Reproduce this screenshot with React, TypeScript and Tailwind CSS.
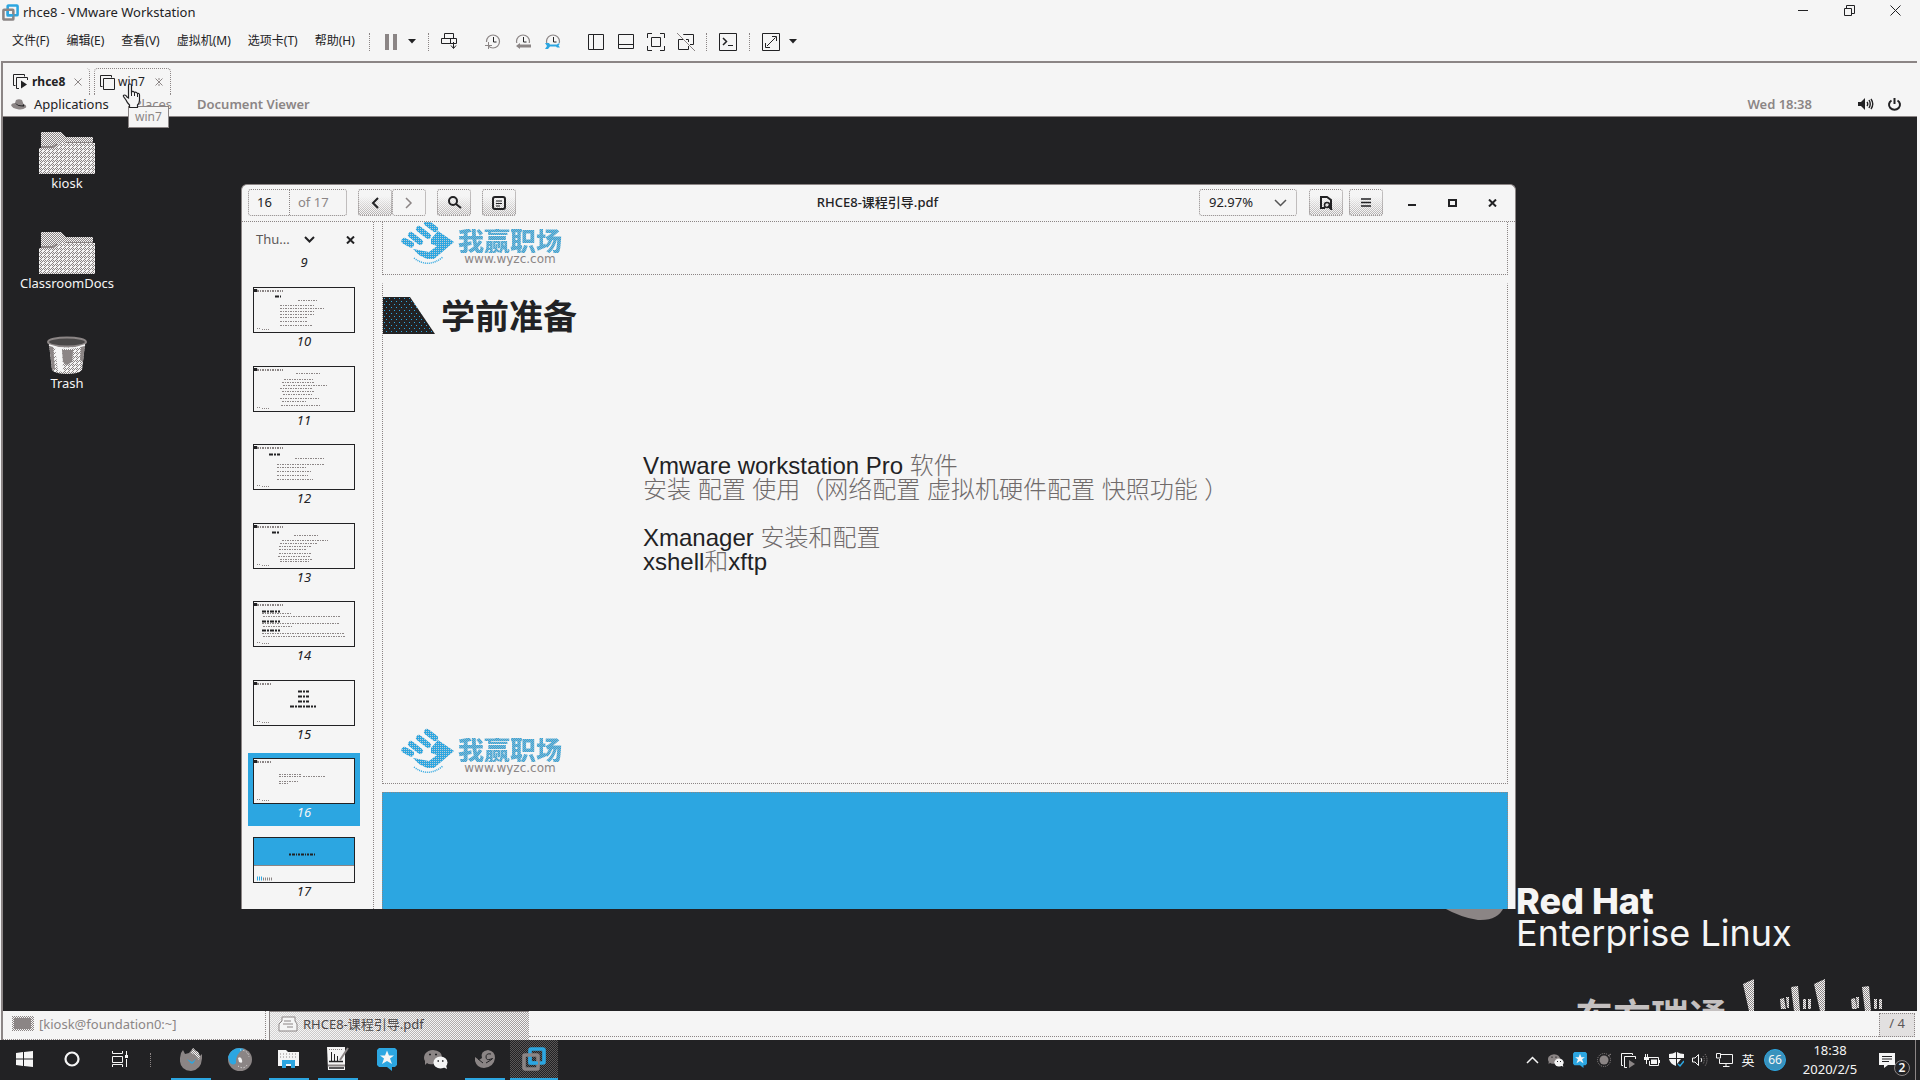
import React from 'react';

const INK = '#222224';
const GREY = '#8b8585';
const PAPER = '#f5f5f5';
const BLUE = '#2ca6e1';

function Patterns() {
  return (
    <svg width="0" height="0" className="absolute" aria-hidden="true">
      <defs>
        <pattern id="grain" width="2" height="2" patternUnits="userSpaceOnUse">
          <rect width="2" height="2" fill={PAPER} />
          <rect width="1" height="1" fill={GREY} />
          <rect x="1" y="1" width="1" height="1" fill={GREY} />
        </pattern>
        <pattern id="grainBlue" width="2" height="2" patternUnits="userSpaceOnUse">
          <rect width="2" height="2" fill={BLUE} />
          <rect x="1" y="1" width="1" height="1" fill="#b9cbd4" />
        </pattern>
        <pattern id="grainInk" width="5" height="6" patternUnits="userSpaceOnUse">
          <rect width="5" height="6" fill={INK} />
          <rect x="1" y="1" width="1" height="1" fill={BLUE} />
          <rect x="3" y="4" width="1" height="1" fill={BLUE} />
        </pattern>
        <pattern id="grainLight" width="4" height="4" patternUnits="userSpaceOnUse">
          <rect width="4" height="4" fill={PAPER} />
          <path d="M0 0h1v1h-1zM2 0h1v1h-1zM1 1h1v1h-1zM3 1h1v1h-1zM2 2h1v1h-1zM1 3h1v1h-1z" fill={GREY} />
        </pattern>
      </defs>
    </svg>
  );
}

function Svg({ w, h = w, children, className = '' }: { w: number; h?: number; children: React.ReactNode; className?: string }) {
  return (
    <svg width={w} height={h} viewBox={`0 0 ${w} ${h}`} fill="none" stroke={INK} className={`shrink-0 ${className}`} aria-hidden="true">
      {children}
    </svg>
  );
}

function VmLogo({ size }: { size: number }) {
  return (
    <svg width={size} height={size} viewBox="0 0 24 24" fill="none" strokeWidth="3.6" aria-hidden="true">
      <rect x="8" y="2" width="14" height="14" rx="1" stroke={BLUE} />
      <rect x="2" y="8" width="14" height="14" rx="1" stroke={GREY} />
      <path d="M8 10V16H16" stroke={BLUE} strokeWidth="3" />
    </svg>
  );
}

/* ---------- VMware window chrome ---------- */

function TitleBar() {
  return (
    <header className="flex h-6 items-center pl-[2px] text-xs">
      <VmLogo size={17} />
      <h1 className="ml-1 text-[13px] leading-4">rhce8 - VMware Workstation</h1>
      <div className="ml-auto flex h-full items-start">
        <button aria-label="Minimize" className="flex h-5 w-[46px] items-center justify-center">
          <Svg w={11}><path d="M0 5.500H10" /></Svg>
        </button>
        <button aria-label="Restore" className="flex h-5 w-[46px] items-center justify-center">
          <Svg w={11}><path d="M.5 3.500H7.500V10.500H.5ZM2.500 3V.5H10.500V8.500H8" /></Svg>
        </button>
        <button aria-label="Close" className="mr-[2px] flex h-5 w-[46px] items-center justify-center">
          <Svg w={11}><path d="M.5.5L10.500 10.500M10.500.5L.5 10.500" /></Svg>
        </button>
      </div>
    </header>
  );
}

const menus = ['文件(F)', '编辑(E)', '查看(V)', '虚拟机(M)', '选项卡(T)', '帮助(H)'];

function Sep() {
  return <span className="h-[18px] border-l border-dotted border-[#8b8585]" />;
}

function Tool({ label, children }: { label: string; children: React.ReactNode }) {
  return (
    <button aria-label={label} className="flex h-6 w-[30px] items-center justify-center">
      {children}
    </button>
  );
}

function Caret() {
  return <Svg w={8} h={5}><path d="M0 0H8L4 4.500Z" fill={INK} stroke="none" /></Svg>;
}

function Clock({ kind }: { kind: 'add' | 'back' | 'manage' }) {
  return (
    <Svg w={18}>
      <circle cx="9" cy="8.500" r="6.500" stroke={GREY} strokeWidth="1.200" />
      <path d="M9.500 4V9H12.500" />
      {kind === 'add' && <><path d="M0 9H5V18H0Z" fill={PAPER} stroke="none" /><path d="M1 12.500H8M4.500 9V16" stroke={GREY} /></>}
      {kind === 'back' && <><path d="M1 10H18V18H1Z" fill={PAPER} stroke="none" /><path d="M2 13L6 10V11.500H17V14.500H6V16Z" fill={GREY} stroke="none" /></>}
      {kind === 'manage' && <><path d="M0 10H18V18H0Z" fill={PAPER} stroke="none" /><path d="M1 10H5L6 11.500H13L14 10.500H16L14.500 12.500L16 14.500H13L12 13.500H6L4 16H1L3 13Z" fill={BLUE} stroke="none" /></>}
    </Svg>
  );
}

function MenuBar() {
  return (
    <div className="flex h-[37px] items-center pb-1 pl-3">
      <nav className="flex gap-[17px]">
        {menus.map((m) => (
          <button key={m} className="text-xs leading-4 whitespace-nowrap">{m}</button>
        ))}
      </nav>
      <div className="ml-[14px] flex items-center pt-[2px]">
        <Sep />
        <button aria-label="Suspend" className="ml-[15px] flex items-center gap-[11px]">
          <Svg w={12} h={16}><path d="M0 0H4V16H0ZM8 0H12V16H8Z" fill={GREY} stroke="none" /></Svg>
          <Caret />
        </button>
        <span className="w-3" />
        <Sep />
        <span className="w-[6px]" />
        <Tool label="Send Ctrl+Alt+Del">
          <Svg w={17}><path d="M3.500 5.500V.5H12.500V5.500M.5 5.500H15.500V10.500H.5ZM9.500 5.500V10.500M12.500 9V15M10 12.500L12.500 15.500L15 12.500" /></Svg>
        </Tool>
        <span className="w-[13px]" />
        <Tool label="Take snapshot"><Clock kind="add" /></Tool>
        <Tool label="Revert snapshot"><Clock kind="back" /></Tool>
        <Tool label="Manage snapshots"><Clock kind="manage" /></Tool>
        <span className="w-[13px]" />
        <Tool label="Show library"><Svg w={16}><path d="M.5.5H15.500V15.500H.5ZM5.500.5V15.500" /></Svg></Tool>
        <Tool label="Show thumbnails"><Svg w={16}><path d="M.5.5H15.500V14.500H.5ZM.5 10.500H15.500" /></Svg></Tool>
        <Tool label="Full screen">
          <Svg w={18}><path d="M.5 5V.5H5M13 .5H17.500V5M17.500 13V17.500H13M5 17.500H.5V13M4.500 4.500H13.500V13.500H4.500Z" /></Svg>
        </Tool>
        <Tool label="Unity">
          <Svg w={18}><path d="M6.500 2V1.500H16.500V11.500H13M9 6.500H11.500V9M6 6.500H1.500V16.500H11.500V13" /><path d="M0 0L18 18" stroke={GREY} /></Svg>
        </Tool>
        <span className="w-[5px]" />
        <Sep />
        <span className="w-[6px]" />
        <Tool label="Console view"><Svg w={18}><path d="M.5.5H17.500V17.500H.5Z" /><path d="M4 5L7.500 8.500L4 12" strokeWidth="1.500" /><path d="M9 12.500H14" /></Svg></Tool>
        <span className="w-[6px]" />
        <Sep />
        <span className="w-[6px]" />
        <Tool label="Stretch guest">
          <Svg w={18}><path d="M.5.5H17.500V17.500H.5ZM10 3.500H14.500V8M3.500 10V14.500H8M5 13L13.500 4.500" /></Svg>
        </Tool>
        <span className="w-[3px]" />
        <Caret />
      </div>
    </div>
  );
}

function VmTabs() {
  return (
    <div className="flex h-[32px] items-end pt-[5px]">
      <div className="flex h-full w-[87px] items-center rounded-tr border-r border-dotted border-[#8b8585] pl-[10px]">
        <Svg w={15}><path d="M2.500 11.500H.5V.5H11.500V2.500M6 14.500H3.500V3.500H14.500V6" /><path d="M8 6.500L14 10.500L8 14.500Z" fill={INK} stroke="none" /></Svg>
        <button className="ml-1 w-[36px] text-left text-xs leading-4 font-bold">rhce8</button>
        <button aria-label="Close rhce8" className="ml-[6px]"><Svg w={8}><path d="M.5.5L7.500 7.500M7.500.5L.5 7.500" stroke={GREY} /></Svg></button>
      </div>
      <div className="relative ml-1 flex h-full w-[77px] items-center rounded-t border border-b-0 border-dotted border-[#8b8585] pl-[5px]">
        <Svg w={15}><path d="M2.500 11.500H.5V.5H11.500V2.500M3.500 3.500H14.500V14.500H3.500Z" /></Svg>
        <button className="ml-[3px] w-8 text-left text-xs leading-4">win7</button>
        <button aria-label="Close win7" className="ml-[5px]"><Svg w={8}><path d="M.5.5L7.500 7.500M7.500.5L.5 7.500M4 0V2M4 6V8" stroke={GREY} /></Svg></button>
        <svg width="19" height="26" viewBox="0 0 19 26" className="absolute top-[14px] left-[27px] z-30" aria-hidden="true">
          <path d="M6.500 15V2.500Q6.500 1 8 1T9.500 2.500V9Q11 7.500 12.500 9.500Q14 8.500 15.500 10.500Q17.500 10 17.500 12V17Q17.500 20 15.500 22V24.500H7.500V22Q5 19.500 4 17L1.500 13.500Q1 12 2.500 12T5 14Z" fill={PAPER} stroke={INK} strokeWidth="1.200" />
          <path d="M9.500 9V13M12.500 10V13M15.500 11V14" stroke={INK} />
        </svg>
        <div role="tooltip" className="absolute top-[37px] left-[33px] z-20 border border-[#8b8585] bg-[#f5f5f5] px-[6px] py-[2px] text-xs leading-4 text-[#8b8585]">win7</div>
      </div>
    </div>
  );
}

/* ---------- Guest desktop ---------- */

function GnomeTop() {
  return (
    <div className="flex h-[22px] items-center border-b border-[#8b8585] pr-[15px] pb-[3px] pl-2 text-[13px] leading-4">
      <svg width="16" height="11" viewBox="0 0 16 11" aria-hidden="true">
        <path d="M4 4L5 1Q8-.5 11 1L12.500 5Q16 6 15 8.500Q12 11 8 10.500Q1 9.500 0 6Q1 4 4 4Z" fill={GREY} />
        <path d="M4 4Q7 8 13 7.500Q14 6.500 12.500 5L11.500 6.500Q7 6.500 4 4Z" fill={INK} />
      </svg>
      <button className="ml-[7px]">Applications</button>
      <button className="ml-[25px] text-[#8b8585]">Places</button>
      <button className="ml-[25px] font-semibold text-[#8b8585]">Document Viewer</button>
      <time className="mr-[46px] ml-auto font-semibold text-[#8b8585]">Wed 18:38</time>
      <button aria-label="Volume">
        <Svg w={16} h={12}><path d="M0 4H3L7 0V12L3 8H0Z" fill={INK} stroke="none" /><path d="M9 4Q10.500 6 9 8M11 2Q13.500 6 11 10M13 1Q16.500 6 13 11" strokeWidth="1.400" /></Svg>
      </button>
      <button aria-label="Power" className="ml-[13px]">
        <Svg w={15} h={13}><path d="M4.500 2.500A5.500 5 0 1 0 10.500 2.500M7.500 0V6" strokeWidth="2" /></Svg>
      </button>
    </div>
  );
}

function Folder() {
  return (
    <svg width="56" height="42" viewBox="0 0 56 42" aria-hidden="true">
      <path d="M2 0H22L27 5H54V20H2Z" fill="url(#grain)" />
      <path d="M0 16H15L20 11H56V42H0Z" fill="url(#grainLight)" />
      <path d="M2 15H14L18 12" stroke={GREY} strokeWidth="2" fill="none" />
      <path d="M26 10.500H54" stroke={GREY} fill="none" />
    </svg>
  );
}

function Trash() {
  return (
    <svg width="40" height="38" viewBox="0 0 40 38" aria-hidden="true">
      <path d="M2 8L5 34Q8 38 20 38T35 34L38 8Z" fill="url(#grainLight)" />
      <path d="M2 8L5 33L8 34L6 9Z" fill={GREY} />
      <path d="M8 11H15L16 36L11 35Z" fill={PAPER} />
      <path d="M15 14H26L25 26L20 29L16 26Z" fill={GREY} />
      <path d="M38 9L36 26L33 24L34 10Z" fill={GREY} />
      <ellipse cx="20" cy="6" rx="19" ry="4.500" fill="#4a4848" stroke={GREY} strokeWidth="2" />
      <path d="M2 9Q20 16 38 9" stroke={PAPER} strokeWidth="1.500" fill="none" />
    </svg>
  );
}

function DesktopIcon({ label, children }: { label: string; children: React.ReactNode }) {
  return (
    <button className="flex h-[100px] flex-col items-center text-[#f5f5f5]">
      <span className="flex h-[43px] items-end">{children}</span>
      <span className="text-[13px] leading-[18px]">{label}</span>
    </button>
  );
}

/* Each row: x, y, length; a fourth value marks a heavy line */
type Row = [number, number, number, number?];
const thumbs: { n: number; rows: Row[] }[] = [
  { n: 10, rows: [[22, 9, 6, 1], [45, 13, 20], [27, 18, 34], [27, 21, 44], [27, 24, 34], [27, 27, 34], [27, 30, 27], [27, 34, 28], [27, 38, 32]] },
  { n: 11, rows: [[43, 7, 24], [31, 13, 30], [29, 16, 32], [30, 19, 44], [27, 22, 33], [29, 25, 32], [30, 28, 30], [27, 32, 40], [29, 35, 24], [28, 39, 39]] },
  { n: 12, rows: [[16, 10, 11, 1], [42, 14, 30], [24, 20, 48], [24, 23, 30], [24, 27, 34], [24, 31, 31], [24, 35, 36]] },
  { n: 13, rows: [[19, 9, 8, 1], [41, 12, 24], [29, 17, 46], [27, 20, 38], [26, 23, 32], [26, 26, 28], [26, 30, 32], [25, 33, 33], [27, 36, 32], [27, 38, 29]] },
  { n: 14, rows: [[9, 10, 18, 1], [9, 12, 29], [10, 15, 78], [9, 20, 18, 1], [9, 22, 78], [10, 25, 30], [9, 29, 18, 1], [9, 32, 82], [10, 35, 82]] },
  { n: 15, rows: [[45, 11, 11, 1], [45, 16, 11, 1], [45, 21, 11, 1], [37, 26, 26, 1]] },
  { n: 16, rows: [[26, 16, 22], [50, 18, 23], [26, 18, 22], [26, 23, 20], [26, 25, 10]] },
  { n: 17, rows: [] },
];

function Thumb({ n, rows }: { n: number; rows: Row[] }) {
  const active = n === 16;
  return (
    <button
      aria-label={`Page ${n}`}
      className={`flex h-[73px] flex-col items-center pt-[5px] ${active ? 'bg-[#2ca6e1] text-[#f5f5f5]' : ''}`}
    >
      <svg width="102" height="46" viewBox="0 0 102 46" fill="none" className="shrink-0">
        <rect x=".5" y=".5" width="101" height="45" fill={PAPER} stroke={INK} />
        {n === 17 ? (
          <>
            <rect x="1" y="1" width="100" height="27" fill={BLUE} />
            <path d="M1 28.500H101" stroke={GREY} />
            <path d="M36 17.500H62" stroke={INK} strokeWidth="2" strokeDasharray="2 1 3 1 1 1" />
            <path d="M4 41.500H9" stroke={BLUE} strokeWidth="4" strokeDasharray="1 1" />
            <path d="M10 42H20" stroke={GREY} strokeWidth="3" strokeDasharray="1 1" />
          </>
        ) : (
          <>
            <path d="M1 2H4L5 5H1Z" fill={INK} />
            <path d={n > 14 ? 'M4 4H18' : 'M4 4H30'} stroke={GREY} strokeWidth="2" strokeDasharray="2 1 1 1" />
            <path d="M4 41.500H7M9 42.500H17" stroke={GREY} strokeDasharray="1 1" />
          </>
        )}
        {rows.map(([x, y, w, heavy], i) => (
          <path
            key={i}
            d={`M${x} ${y + 0.5}h${w}`}
            stroke={heavy ? INK : GREY}
            strokeWidth={heavy ? 2 : 1}
            strokeDasharray={heavy ? '4 1 2 1' : '2 1 1 1'}
          />
        ))}
      </svg>
      <span className="text-[13px] leading-4 italic">{n}</span>
    </button>
  );
}

function SchoolLogo() {
  return (
    <div className="flex items-center gap-[3px] pb-[9px] pl-[18px]">
      <svg width="54" height="46" viewBox="0 0 54 46" fill="none" aria-hidden="true">
        <g stroke="url(#grainBlue)" strokeWidth="6" strokeLinecap="round">
          <path d="M26 4L34 10" /><path d="M18 10L27 17" /><path d="M10 16L19 23" /><path d="M3.500 22L10 25.500" />
        </g>
        <path d="M37 12L53 23L33 40H26L18 36L12 30L28 33L36 27L30 25V20Z" fill="url(#grainBlue)" />
        <path d="M13 39Q27 50 42 38" stroke={BLUE} strokeWidth="1.500" strokeDasharray="1 1" />
      </svg>
      <div className="flex flex-col items-center pt-[10px]">
        <span className="bg-[repeating-conic-gradient(#8fb4c6_0_25%,#2ca6e1_0_50%)] bg-[length:2px_2px] bg-clip-text text-[26px] leading-6 font-black text-transparent">我赢职场</span>
        <span className="font-['DejaVu_Sans'] text-xs leading-3 text-[#8b8585]">www.wyzc.com</span>
      </div>
    </div>
  );
}

const shade =
  'bg-[linear-gradient(to_bottom,#f5f5f5_25%,rgba(245,245,245,0.35)),repeating-conic-gradient(#8b8585_0_25%,#f5f5f5_0_50%)] bg-[length:100%_100%,2px_2px]';

function HeaderButton({ label, children, flat = false }: { label: string; children: React.ReactNode; flat?: boolean }) {
  return (
    <button
      aria-label={label}
      className={`flex h-[27px] w-[34px] items-center justify-center rounded-[3px] border border-dotted border-[#8b8585] ${flat ? '' : shade}`}
    >
      {children}
    </button>
  );
}

function PdfHeader() {
  return (
    <div className="flex h-[37px] items-center border-b border-dotted border-[#8b8585] pr-[3px] pb-px pl-[6px] text-[13px]">
      <div className="flex h-[27px] w-[99px] rounded-[3px] border border-dotted border-[#8b8585]">
        <input aria-label="Page" defaultValue="16" className="w-[41px] border-r border-dotted border-[#8b8585] bg-transparent pl-[8px] outline-none" />
        <span className="pl-2 leading-[25px] text-[#8b8585]">of 17</span>
      </div>
      <div className="ml-[11px] flex">
        <HeaderButton label="Previous page"><Svg w={8} h={12}><path d="M7 1L2 6L7 11" strokeWidth="2" /></Svg></HeaderButton>
        <HeaderButton label="Next page" flat><Svg w={8} h={12}><path d="M1 1L6 6L1 11" stroke={GREY} strokeWidth="1.500" /></Svg></HeaderButton>
      </div>
      <span className="w-[11px]" />
      <HeaderButton label="Find"><Svg w={15} h={13}><circle cx="6" cy="5" r="4" strokeWidth="2" /><path d="M9 8L14 12" strokeWidth="2" /></Svg></HeaderButton>
      <span className="w-[11px]" />
      <HeaderButton label="Annotate"><Svg w={14} h={14}><rect x="1" y="1" width="12" height="12" rx="2" strokeWidth="2" /><path d="M4 5H10M4 7.500H10M4 10H8" /></Svg></HeaderButton>
      <h2 className="flex-1 pl-10 text-center font-medium whitespace-nowrap">RHCE8-课程引导.pdf</h2>
      <button aria-label="Zoom 92.97%" className="flex h-[27px] w-[98px] items-center justify-between rounded-[3px] border border-dotted border-[#8b8585] px-[9px]">
        92.97%
        <Svg w={13} h={8}><path d="M1 1L6.500 6.500L12 1" stroke="#555" strokeWidth="1.500" /></Svg>
      </button>
      <span className="w-3" />
      <HeaderButton label="Document options">
        <Svg w={14} h={14}><path d="M6 12H2V1H8L12 4V13" strokeWidth="2" /><circle cx="8" cy="9" r="2.500" strokeWidth="1.500" /><path d="M9 10L13 14" strokeWidth="2" /></Svg>
      </HeaderButton>
      <span className="w-[6px]" />
      <HeaderButton label="Menu"><Svg w={10} h={9}><path d="M0 1H10M0 4.500H10M0 8H10" strokeWidth="1.500" /></Svg></HeaderButton>
      <div className="ml-[9px] flex">
        <button aria-label="Minimize window" className="flex w-10 justify-center pt-1"><Svg w={8} h={4}><path d="M0 2H8" strokeWidth="2" /></Svg></button>
        <button aria-label="Maximize window" className="flex w-10 items-center justify-center"><Svg w={9} h={8}><path d="M1 1H8V7H1Z" strokeWidth="2" /></Svg></button>
        <button aria-label="Close window" className="flex w-10 items-center justify-center"><Svg w={9} h={8}><path d="M1 .5L8 7.500M8 .5L1 7.500" strokeWidth="2" /></Svg></button>
      </div>
    </div>
  );
}

function PdfWindow() {
  return (
    <section className="absolute top-[67px] right-[401px] bottom-[102px] left-[238px] flex flex-col overflow-hidden rounded-t-md border border-b-0 border-[#8b8585] bg-[#f5f5f5]">
      <PdfHeader />
      <div className="flex min-h-0 flex-1">
        <aside className="flex w-[132px] flex-col border-r border-dotted border-[#8b8585] text-[13px]">
          <div className="flex h-[35px] items-center pl-[14px]">
            <span className="w-12 text-[#5c5858]">Thu...</span>
            <button aria-label="Sidebar view"><Svg w={11} h={7}><path d="M1 1L5.500 5.500L10 1" strokeWidth="2" /></Svg></button>
            <button aria-label="Close sidebar" className="ml-[31px]"><Svg w={9} h={8}><path d="M1 .5L8 7.500M8 .5L1 7.500" strokeWidth="2" /></Svg></button>
          </div>
          <span className="h-[25px] pr-[7px] text-center leading-[10px] italic">9</span>
          <div className="flex flex-1 flex-col justify-between pr-[13px] pb-1 pl-[6px]">
            {thumbs.map((t) => <Thumb key={t.n} {...t} />)}
          </div>
        </aside>
        <div className="flex min-w-0 flex-1 flex-col pr-[7px] pl-[8px]">
          <div className="flex h-[53px] shrink-0 items-end overflow-hidden border border-t-0 border-dotted border-[#8b8585]">
            <SchoolLogo />
          </div>
          <article className="mt-2 flex flex-1 flex-col border border-dotted border-[#8b8585] border-t-transparent">
            <div className="mt-[13px] flex items-center">
              <svg width="52" height="37" viewBox="0 0 52 37" aria-hidden="true"><path d="M0 0H27L52 37H0Z" fill="url(#grainInk)" /></svg>
              <h3 className="ml-[6px] text-[34px] leading-[36px] font-bold">学前准备</h3>
            </div>
            <div className="mt-[120px] ml-[260px] font-['Liberation_Sans','Noto_Sans_CJK_SC',sans-serif] text-2xl leading-6">
              <p>Vmware workstation Pro <span className="font-light text-[#6f6a6a]">软件</span></p>
              <p className="font-light text-[#6f6a6a]">安装 配置 使用（网络配置 虚拟机硬件配置 快照功能 ）</p>
              <p className="mt-6">Xmanager <span className="font-light text-[#6f6a6a]">安装和配置</span></p>
              <p>xshell<span className="font-light text-[#6f6a6a]">和</span>xftp</p>
            </div>
            <div className="mt-auto"><SchoolLogo /></div>
          </article>
          <div className="mt-[8px] h-[117px] shrink-0 border border-b-0 border-dotted border-[#8b8585] bg-[#2ca6e1]" />
        </div>
      </div>
    </section>
  );
}

function Desktop() {
  return (
    <main className="relative flex flex-1 overflow-hidden bg-[#222224]">
      <div className="flex w-32 flex-col pt-[14px]">
        <DesktopIcon label="kiosk"><Folder /></DesktopIcon>
        <DesktopIcon label="ClassroomDocs"><Folder /></DesktopIcon>
        <DesktopIcon label="Trash"><Trash /></DesktopIcon>
      </div>
      <svg width="64" height="34" viewBox="0 0 64 34" className="absolute right-[411px] bottom-[90px]" aria-hidden="true">
        <path d="M0 20Q20 31 36 33Q56 34 62 20V0H0Z" fill={GREY} />
      </svg>
      <div className="absolute right-[109px] bottom-[62px] w-[292px] font-['Inter',sans-serif] text-[36px] leading-8 whitespace-nowrap text-[#f5f5f5]">
        <p className="font-extrabold">Red Hat</p>
        <p>Enterprise Linux</p>
      </div>
      <div className="absolute right-[34px] bottom-0 flex h-8 items-start gap-4 overflow-hidden">
        <span className="mt-[18px] text-[38px] leading-[38px] font-bold text-[#c4c0c0]">东方瑞通</span>
        <svg width="140" height="32" viewBox="0 0 140 32" fill="url(#grain)" aria-hidden="true">
          <path d="M0 5L11 0V32H6ZM37 20L41 19L43 30H38ZM43 18H46V29H44ZM48 8L55 7L57 32H51ZM60 20H63V30H60ZM65 20H68V30H65ZM71 5L82 0V32H77ZM108 20L112 19L114 30H109ZM113 18H116V29H114ZM119 8L126 7L128 32H122ZM131 20H134V30H131ZM136 20H139V30H136Z" />
        </svg>
      </div>
      <PdfWindow />
    </main>
  );
}

function GnomeBottom() {
  return (
    <div className="flex h-[29px] shrink-0 items-stretch text-[13px] leading-4">
      <button className="flex w-[263px] items-center gap-[5px] border-r border-b border-dotted border-[#8b8585] pb-[3px] pl-[9px] text-[#8b8585]">
        <svg width="22" height="15" viewBox="0 0 22 15" aria-hidden="true"><rect width="22" height="15" fill="url(#grain)" /><rect x="2" y="2" width="17" height="11" fill={GREY} /></svg>
        [kiosk@foundation0:~]
      </button>
      <button className="ml-[3px] flex w-[260px] items-center gap-[5px] border-t border-l border-[#8b8585] bg-[linear-gradient(to_right,rgba(245,245,245,0.7),rgba(245,245,245,0.2)),repeating-conic-gradient(#8b8585_0_25%,#f5f5f5_0_50%)] bg-[length:100%_100%,2px_2px] pb-[4px] pl-[8px] text-[#4b4848]">
        <Svg w={20} h={16}><path d="M4 1H17V5L19 8V15H1V8L4 5Z" fill={PAPER} stroke={GREY} /><path d="M5 8H15M6 5H13M9 11H15" stroke={GREY} /></Svg>
        RHCE8-课程引导.pdf
      </button>
      <span className="mt-auto mb-[3px] flex-1 border-b border-dotted border-[#8b8585]" />
      <button className="mt-[2px] mr-[2px] mb-[3px] w-[36px] border border-dotted border-[#8b8585] bg-[#e2e0e0] pb-[4px] text-[13px] text-[#5c5858]">/ 4</button>
    </div>
  );
}

/* ---------- Windows taskbar ---------- */

function Wechat({ w, h }: { w: number; h: number }) {
  return (
    <svg width={w} height={h} viewBox="0 0 24 19" aria-hidden="true">
      <path d="M9 0Q18 1 18 7Q10 8 10 14Q5 15 3 13L1 15V11Q-1 8 1 4Q4 0 9 0Z" fill={GREY} />
      <ellipse cx="16.500" cy="12.500" rx="7" ry="6" fill={PAPER} /><path d="M19 17L23 19L22 15Z" fill={PAPER} />
      <path d="M13.500 11H15M18 11H19.500M5 4.500H7M11 4.500H13" stroke={INK} strokeWidth="1.500" />
    </svg>
  );
}

function StarBadge({ w, h }: { w: number; h: number }) {
  return (
    <svg width={w} height={h} viewBox="0 0 20 23" aria-hidden="true">
      <path d="M2 0H18L20 2V17L18 19H15V23L10 19H2L0 17V2Z" fill={BLUE} />
      <path d="M10 2.500L12 7.500H17L13 10.500L15 16L10 13L5 16L7 10.500L3 7.500H8Z" fill={PAPER} />
    </svg>
  );
}

function TaskCell({ label, line, active, children }: { label: string; line?: boolean; active?: boolean; children: React.ReactNode }) {
  return (
    <button
      aria-label={label}
      className={`flex h-10 w-12 flex-col items-center justify-end ${active ? 'bg-[repeating-conic-gradient(#222224_0_25%,#5a5757_0_50%)] bg-[length:2px_2px]' : ''}`}
    >
      <span className="flex flex-1 items-center">{children}</span>
      <span className={`h-[2px] ${active ? 'w-12 bg-[#2ca6e1]' : line ? 'w-10 bg-[#2ca6e1]' : 'w-10'}`} />
    </button>
  );
}

function Tray({ label, children }: { label: string; children: React.ReactNode }) {
  return <button aria-label={label} className="flex h-10 w-6 items-center justify-center">{children}</button>;
}

function Taskbar() {
  return (
    <footer className="flex h-10 shrink-0 items-center bg-[#222224] text-[#f5f5f5]">
      <TaskCell label="Start"><Svg w={17} h={16}><path d="M0 2L7 1V7.500H0ZM8 1L17 0V7.500H8ZM0 8.500H7V15L0 14ZM8 8.500H17V16L8 15Z" fill={PAPER} stroke="none" /></Svg></TaskCell>
      <TaskCell label="Cortana"><Svg w={16}><circle cx="8" cy="8" r="6.500" stroke={PAPER} strokeWidth="2.200" /></Svg></TaskCell>
      <TaskCell label="Task view"><Svg w={17} h={16}><path d="M.5 0V2.500H10.500V0M.5 5.500H10.500V11.500H.5ZM.5 16V13.500H10.500V16M14.500 0V4M14.500 8V16" stroke={PAPER} /><rect x="13" y="4" width="3" height="3" fill={PAPER} stroke="none" /></Svg></TaskCell>
      <div className="w-[23px] pl-[6px]"><span className="block h-[14px] border-l border-dotted border-[#8b8585]" /></div>
      <div className="flex gap-px">
        <TaskCell label="Firefox" line>
          <svg width="22" height="23" viewBox="0 0 22 23" aria-hidden="true"><path d="M1 5L3 2L5 6L9 5L13 0L16 3L18 4L20 8L22 6Q23 22 11 23Q-1 22 0 10Z" fill={GREY} /><path d="M13 0L16 3L18 4L20 8L19 12L15 7L11 5Z" fill="url(#grain)" /><path d="M7 11L12 14L16 11L13 15.500H11Z" fill={BLUE} /></svg>
        </TaskCell>
        <TaskCell label="Browser">
          <svg width="24" height="23" viewBox="0 0 24 23" aria-hidden="true"><ellipse cx="12" cy="11.500" rx="12" ry="11.500" fill={GREY} /><path d="M12 0Q3 0 0 9L2 15Q6 18 8 15Q7 6 16 1Z" fill={BLUE} /><path d="M10 10Q13 8 14 12T11 14Z" fill={PAPER} /><path d="M12 2Q20 2 21 9M10 18Q16 22 19 17" stroke={PAPER} strokeDasharray="1 2" fill="none" strokeWidth="1" /></svg>
        </TaskCell>
        <TaskCell label="File Explorer" line>
          <svg width="22" height="20" viewBox="0 0 22 20" aria-hidden="true"><path d="M0 1H8L10 3H21V17H0Z" fill={PAPER} /><path d="M2 5H20M2 8H20" stroke={GREY} strokeDasharray="1 2" /><path d="M4 11H17V19H13V15H8V19H4Z" fill={BLUE} /></svg>
        </TaskCell>
        <TaskCell label="Editor" line>
          <svg width="22" height="24" viewBox="0 0 22 24" aria-hidden="true"><path d="M0 0H18V23H1Z" fill={PAPER} /><path d="M2 2.500H16" stroke={GREY} strokeDasharray="1 1" /><path d="M4.500 5V14M7.500 7V14M10.500 9V14" stroke={INK} /><path d="M21 1L13 13" stroke={GREY} strokeWidth="2" /><path d="M2 14.500H16M2 21H17" stroke={INK} strokeWidth="1.500" /><path d="M1 18.500H18" stroke={GREY} strokeWidth="2" /></svg>
        </TaskCell>
        <TaskCell label="Star"><StarBadge w={20} h={23} /></TaskCell>
        <TaskCell label="WeChat"><Wechat w={24} h={19} /></TaskCell>
        <TaskCell label="Snail" line>
          <svg width="22" height="19" viewBox="0 0 22 19" aria-hidden="true"><path d="M1 7L5 10L8 8Q6 1 14 0Q21 1 21 8Q20 17 10 18Q3 18 1 11Z" fill={GREY} /><path d="M17 4Q12 3 12 7T17 9T12 13M4 9L9 13" stroke={INK} fill="none" /></svg>
        </TaskCell>
        <TaskCell label="VMware" active><VmLogo size={24} /></TaskCell>
      </div>
      <div className="ml-auto flex items-center">
        <Tray label="Hidden icons"><Svg w={13} h={8}><path d="M1 7L6.500 1.500L12 7" stroke={PAPER} strokeWidth="1.500" /></Svg></Tray>
        <Tray label="WeChat"><Wechat w={16} h={13} /></Tray>
        <Tray label="Star"><StarBadge w={14} h={16} /></Tray>
        <Tray label="Record"><Svg w={16} h={14}><circle cx="8" cy="7" r="6.500" stroke={GREY} strokeDasharray="1 1" /><circle cx="8" cy="7" r="4.500" fill={GREY} stroke="none" /><path d="M12 3L15 1" stroke={GREY} /></Svg></Tray>
        <Tray label="Virtual machine"><Svg w={15}><path d="M2 12.500H.5V.5H11.500V2M6 14.500H3.500V3.500H14.500V6" stroke={PAPER} /><path d="M8 7L14 11L8 15Z" fill={GREY} stroke="none" /></Svg></Tray>
        <Tray label="Battery"><Svg w={16} h={13}><path d="M4 3.500H14.500V11.500H5.500V7M15.500 6V9" stroke={PAPER} /><path d="M7 5.500H13V10H7Z" fill={PAPER} stroke="none" /><path d="M0 3H5V6H0ZM1 0H2V3H1ZM3 0H4V3H3ZM2 6H3V10H2Z" fill={PAPER} stroke="none" /></Svg></Tray>
        <Tray label="Security"><Svg w={15} h={16}><path d="M7 0V6H0V2Q4 2 7 0ZM8 0Q11 2 15 2V6H8ZM0 7H7V14Q1 12 0 7ZM8 7H12L8 12Z" fill={PAPER} stroke="none" /><path d="M9 12L11 14L15 9" stroke={BLUE} strokeWidth="1.500" /></Svg></Tray>
        <Tray label="Volume"><Svg w={16} h={14}><path d="M.5 5V9H3L6.500 12.500V1.500L3 5Z" stroke={PAPER} /><path d="M9 5Q10.500 7 9 9" stroke={PAPER} /><path d="M11 3Q13.500 7 11 11M13 1Q17 7 13 13" stroke={GREY} strokeDasharray="1 1" /></Svg></Tray>
        <Tray label="Network"><Svg w={17} h={14}><path d="M5 1.500H16.500V10.500H3.500V6M10 11V13.500M7 13.500H13.500" stroke={PAPER} /><path d="M.5.5H4.500V5H.5Z" stroke={PAPER} /></Svg></Tray>
        <button className="w-6 text-center text-[13px] leading-4">英</button>
        <button className="mx-1 flex h-[22px] w-[22px] items-center justify-center rounded-full border border-[#2ca6e1] bg-[#3a92bd] text-[12px] leading-4">66</button>
        <button className="ml-1 w-[72px] text-center text-[13px] leading-[19px]">
          <time className="block">18:38</time>
          <time className="block">2020/2/5</time>
        </button>
        <button aria-label="Notifications" className="relative ml-[13px] w-[36px]">
          <Svg w={16} h={15}><path d="M0 0H16V12H9L5 15V12H0Z" fill={PAPER} stroke="none" /><path d="M3 3.500H13M3 6H13M3 8.500H10" /></Svg>
          <span className="absolute top-[7px] left-[15px] h-4 w-4 rounded-full border border-[#8b8585] bg-[#222224] text-center text-[12px] leading-[14px] font-semibold">2</span>
        </button>
        <span className="mr-1 h-10 border-l border-[#8b8585]" />
      </div>
    </footer>
  );
}

export default function App() {
  return (
    <div className="flex min-h-screen flex-col bg-[#f5f5f5] font-['Noto_Sans','Noto_Sans_CJK_SC',sans-serif] text-[#222224]">
      <Patterns />
      <TitleBar />
      <MenuBar />
      <div className="ml-px mr-[3px] flex flex-1 flex-col border-t-2 border-l-2 border-[#8b8585]">
        <VmTabs />
        <GnomeTop />
        <Desktop />
        <GnomeBottom />
      </div>
      <Taskbar />
    </div>
  );
}
